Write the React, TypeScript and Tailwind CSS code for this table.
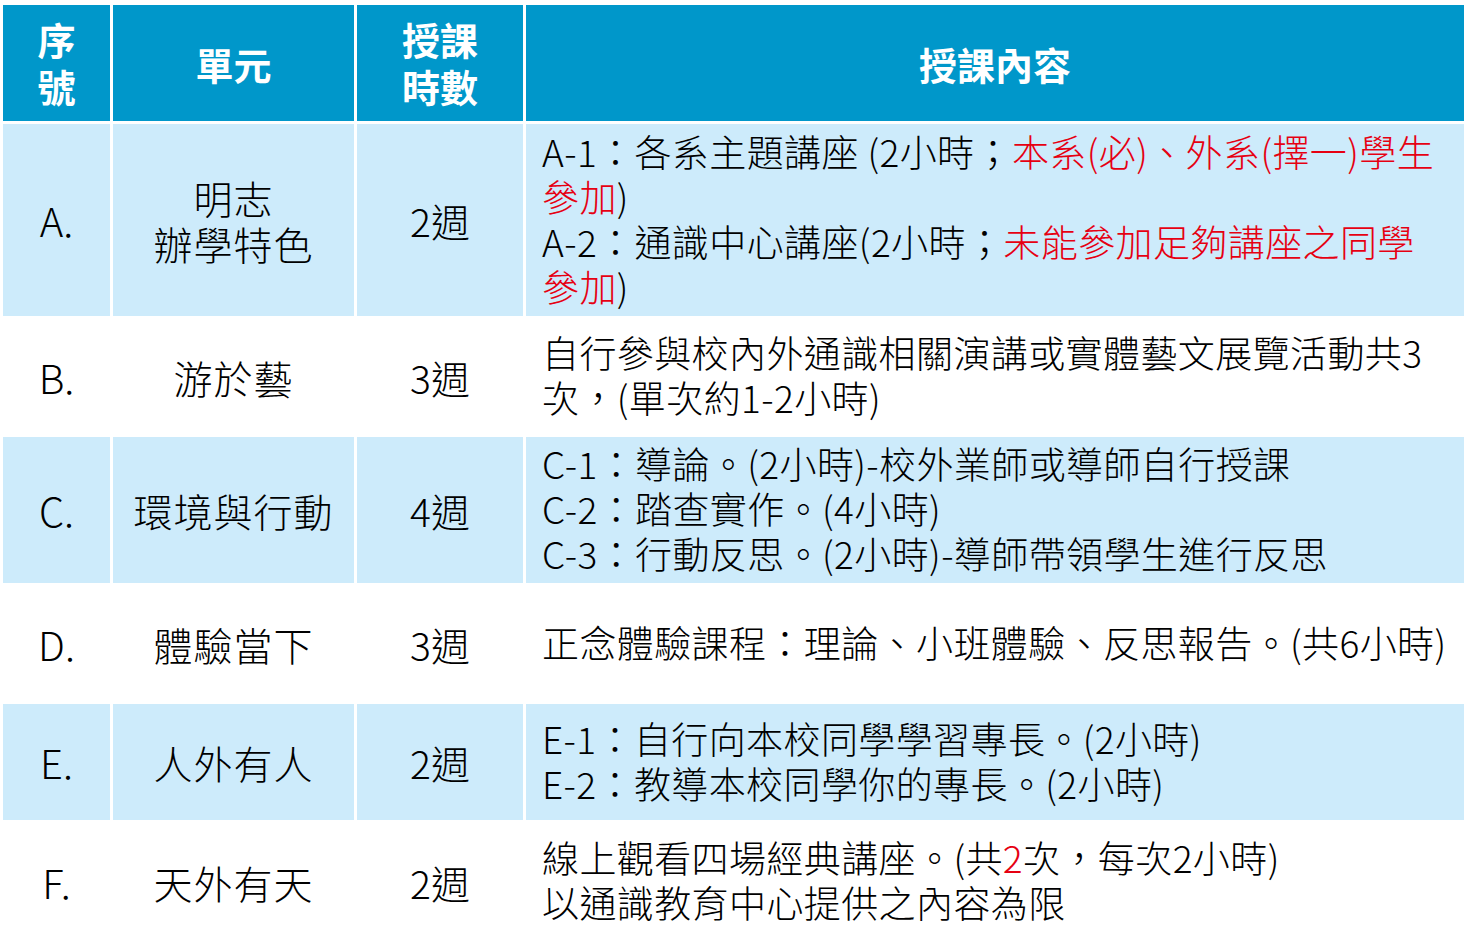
import React from "react";

const FONT = { fontFamily: '"Noto Sans CJK TC", "Noto Sans", sans-serif' };

type Row = {
  id: string;
  unit: React.ReactNode;
  weeks: string;
  content: React.ReactNode;
  blue: boolean;
  h: string;
};

const R = ({ children }: { children: React.ReactNode }) => (
  <span className="text-[#e60012]">{children}</span>
);

const rows: Row[] = [
  {
    id: "A.",
    unit: (
      <>
        <div>明志</div>
        <div>辦學特色</div>
      </>
    ),
    weeks: "2週",
    blue: true,
    h: "h-[192px]",
    content: (
      <>
        <div>
          A-1：各系主題講座 (2小時；<R>本系(必)、外系(擇一)學生</R>
        </div>
        <div>
          <R>參加</R>)
        </div>
        <div>
          A-2：通識中心講座(2小時；<R>未能參加足夠講座之同學</R>
        </div>
        <div>
          <R>參加</R>)
        </div>
      </>
    ),
  },
  {
    id: "B.",
    unit: "游於藝",
    weeks: "3週",
    blue: false,
    h: "h-[115px]",
    content: (
      <>
        <div>自行參與校內外通識相關演講或實體藝文展覽活動共3</div>
        <div>次，(單次約1-2小時)</div>
      </>
    ),
  },
  {
    id: "C.",
    unit: "環境與行動",
    weeks: "4週",
    blue: true,
    h: "h-[146px]",
    content: (
      <>
        <div>C-1：導論。(2小時)-校外業師或導師自行授課</div>
        <div>C-2：踏查實作。(4小時)</div>
        <div>C-3：行動反思。(2小時)-導師帶領學生進行反思</div>
      </>
    ),
  },
  {
    id: "D.",
    unit: "體驗當下",
    weeks: "3週",
    blue: false,
    h: "h-[115px]",
    content: <div>正念體驗課程：理論、小班體驗、反思報告。(共6小時)</div>,
  },
  {
    id: "E.",
    unit: "人外有人",
    weeks: "2週",
    blue: true,
    h: "h-[116px]",
    content: (
      <>
        <div>E-1：自行向本校同學學習專長。(2小時)</div>
        <div>E-2：教導本校同學你的專長。(2小時)</div>
      </>
    ),
  },
  {
    id: "F.",
    unit: "天外有天",
    weeks: "2週",
    blue: false,
    h: "h-[117px]",
    content: (
      <>
        <div>
          線上觀看四場經典講座。(共<R>2</R>次，每次2小時)
        </div>
        <div>以通識教育中心提供之內容為限</div>
      </>
    ),
  },
];

export default function App() {
  return (
    <div className="w-[1470px] h-[948px] bg-white overflow-hidden pt-[5px] pl-[3px]" style={FONT}>
      <div className="grid grid-cols-[107px_241px_166px_938px] gap-[3px]">
        {/* Header */}
        <div className="h-[116px] bg-[#0097ca] text-white font-bold text-[38px] leading-[47px] flex flex-col items-center justify-center text-center pb-[2px]">
          <div>序</div>
          <div>號</div>
        </div>
        <div className="h-[116px] bg-[#0097ca] text-white font-bold text-[38px] leading-[47px] flex items-center justify-center text-center">
          單元
        </div>
        <div className="h-[116px] bg-[#0097ca] text-white font-bold text-[38px] leading-[47px] flex flex-col items-center justify-center text-center pb-[2px]">
          <div>授課</div>
          <div>時數</div>
        </div>
        <div className="h-[116px] bg-[#0097ca] text-white font-bold text-[38px] leading-[47px] flex items-center justify-center text-center">
          授課內容
        </div>

        {rows.map((r) => {
          const bg = r.blue ? "bg-[#cdebfb]" : "bg-white";
          return (
            <React.Fragment key={r.id}>
              <div className={`${r.h} ${bg} flex items-center justify-center text-black font-light text-[40px] leading-[48px]`}>
                {r.id}
              </div>
              <div className={`${r.h} ${bg} flex flex-col items-center justify-center text-center text-black font-light text-[39px] leading-[46px] tracking-[1px]`}>
                {typeof r.unit === "string" ? <div>{r.unit}</div> : r.unit}
              </div>
              <div className={`${r.h} ${bg} flex items-center justify-center text-black font-light text-[39px] leading-[46px]`}>
                {r.weeks}
              </div>
              <div className={`${r.h} ${bg} flex flex-col justify-center pl-[16px] text-black font-light text-[37px] leading-[45px] tracking-[0.4px] whitespace-nowrap pb-[3px]`}>
                {r.content}
              </div>
            </React.Fragment>
          );
        })}
      </div>
    </div>
  );
}
